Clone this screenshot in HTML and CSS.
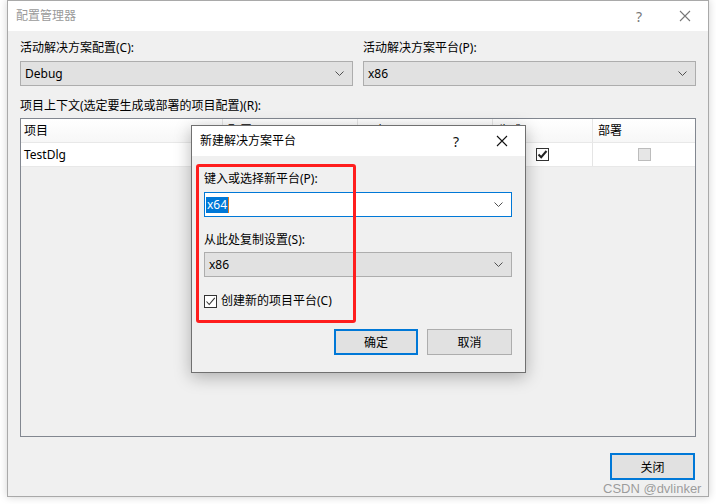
FILE: index.html
```html
<!DOCTYPE html>
<html lang="zh-CN">
<head>
  <meta charset="UTF-8">
  <title>配置管理器</title>
  <link rel="stylesheet" href="styles.css">
</head>
<body>
  <div class="window">
    <div class="titlebar">
      <span class="title">配置管理器</span>
      <span class="tb-btn">?</span>
      <span class="tb-btn">
        <svg width="12" height="12" viewBox="0 0 12 12"><path d="M1 1L11 11M11 1L1 11" stroke="currentColor" stroke-width="1.1" fill="none"/></svg>
      </span>
    </div>
    <div class="content">
      <div class="selectors">
        <div class="field">
          <div class="label">活动解决方案配置(C):</div>
          <div class="combo"><span>Debug</span><svg class="chev" width="9" height="5" viewBox="0 0 9 5"><path d="M0.5 0.5L4.5 4.5L8.5 0.5" stroke="#505050" fill="none"/></svg></div>
        </div>
        <div class="field">
          <div class="label">活动解决方案平台(P):</div>
          <div class="combo"><span>x86</span><svg class="chev" width="9" height="5" viewBox="0 0 9 5"><path d="M0.5 0.5L4.5 4.5L8.5 0.5" stroke="#505050" fill="none"/></svg></div>
        </div>
      </div>
      <div class="label grid-label">项目上下文(选定要生成或部署的项目配置)(R):</div>
      <div class="grid">
        <div class="grid-row header">
          <div class="cell first">项目</div>
          <div class="cell">配置</div>
          <div class="cell">平台</div>
          <div class="cell">生成</div>
          <div class="cell">部署</div>
        </div>
        <div class="grid-row">
          <div class="cell first">TestDlg</div>
          <div class="cell"></div>
          <div class="cell"></div>
          <div class="cell center">
            <span class="check on"><svg width="11" height="11" viewBox="0 0 11 11"><path d="M1.5 5.5L4.2 8.2L9.5 2" stroke="#222" stroke-width="2" fill="none"/></svg></span>
          </div>
          <div class="cell center"><span class="check disabled"></span></div>
        </div>
      </div>
      <div class="footer">
        <button class="btn default">关闭</button>
      </div>
    </div>
  </div>

  <div class="dialog">
    <div class="titlebar dlg-titlebar">
      <span class="title">新建解决方案平台</span>
      <span class="tb-btn">?</span>
      <span class="tb-btn">
        <svg width="12" height="12" viewBox="0 0 12 12"><path d="M1 1L11 11M11 1L1 11" stroke="currentColor" stroke-width="1.1" fill="none"/></svg>
      </span>
    </div>
    <div class="dlg-body">
      <div class="label">键入或选择新平台(P):</div>
      <div class="combo editable"><span class="selected">x64</span><span class="caret"></span><svg class="chev" width="9" height="5" viewBox="0 0 9 5"><path d="M0.5 0.5L4.5 4.5L8.5 0.5" stroke="#505050" fill="none"/></svg></div>
      <div class="label second">从此处复制设置(S):</div>
      <div class="combo"><span>x86</span><svg class="chev" width="9" height="5" viewBox="0 0 9 5"><path d="M0.5 0.5L4.5 4.5L8.5 0.5" stroke="#505050" fill="none"/></svg></div>
      <div class="check-row">
        <span class="check thin"><svg width="11" height="11" viewBox="0 0 11 11"><path d="M1.5 5.5L4.2 8.5L9.8 1.8" stroke="#333" stroke-width="1.1" fill="none"/></svg></span>
        <span>创建新的项目平台(C)</span>
      </div>
      <div class="buttons">
        <button class="btn default">确定</button>
        <button class="btn">取消</button>
      </div>
    </div>
  </div>

  <div class="annotation"></div>
  <div class="watermark">CSDN @dvlinker</div>
</body>
</html>
```

FILE: styles.css
```css
/* Base */
body {
  margin: 0;
  background-color: #ffffff;
  font-family: "Noto Sans", "Noto Sans CJK SC", sans-serif;
  font-size: 12px;
  color: #000;
  width: 716px;
  height: 504px;
  overflow: hidden;
  position: relative;
}

.window {
  margin-left: 7px;
  width: 702px;
  height: 497px;
  box-sizing: border-box;
  border: 1px solid #a9a9a9;
  background-color: #f0f0f0;
  box-shadow: 0 0 8px rgba(0, 0, 0, 0.18);
  display: flex;
  flex-direction: column;
}

/* Title bars */
.titlebar {
  height: 30px;
  background-color: #ffffff;
  display: flex;
  align-items: center;
  flex-shrink: 0;
}

.titlebar .title {
  flex: 1;
  padding-left: 8px;
  color: #9a9a9a;
  line-height: 16px;
}

.tb-btn {
  width: 46px;
  height: 30px;
  display: flex;
  align-items: center;
  justify-content: center;
  color: #777;
  font-size: 14px;
}

.dlg-titlebar .title {
  color: #000;
}

.dlg-titlebar .tb-btn {
  color: #111;
}

/* Main content */
.content {
  flex: 1;
  padding: 9px 12px 0 12px;
  display: flex;
  flex-direction: column;
}

.selectors {
  display: grid;
  grid-template-columns: 333px 1fr;
  column-gap: 10px;
}

.label {
  line-height: 16px;
  margin-bottom: 5px;
}

.combo {
  height: 25px;
  box-sizing: border-box;
  border: 1px solid #adadad;
  background-color: #e1e1e1;
  display: flex;
  align-items: center;
  padding: 0 8px 0 4px;
  line-height: 16px;
}

.combo span:first-child {
  flex: 0 0 auto;
}

.combo .chev {
  margin-left: auto;
}

.combo.editable {
  background-color: #ffffff;
  border-color: #0078d7;
  padding-left: 1px;
}

.selected {
  background-color: #0078d7;
  color: #ffffff;
  padding: 0 1px;
}

.caret {
  width: 1px;
  height: 16px;
  background-color: #e07b1a;
}

.grid-label {
  margin-top: 12px;
  margin-bottom: 4px;
}

/* Project grid */
.grid {
  height: 319px;
  box-sizing: border-box;
  border: 1px solid #828790;
  background-color: #f0f0f0;
}

.grid-row {
  display: grid;
  grid-template-columns: 202px 135px 135px 100px 1fr;
  height: 23px;
  background-color: #ffffff;
  border-bottom: 1px solid #e8e8e8;
}

.grid-row.header {
  background: linear-gradient(#ffffff, #f7f7f7);
}

.cell {
  border-right: 1px solid #e5e5e5;
  padding-left: 5px;
  line-height: 23px;
  display: flex;
  align-items: center;
}

.cell.first {
  padding-left: 3px;
}

.cell:last-child {
  border-right: none;
}

.cell.center {
  justify-content: center;
  padding-left: 0;
}

.check {
  width: 13px;
  height: 13px;
  box-sizing: border-box;
  border: 1px solid #333;
  background-color: #ffffff;
  display: flex;
  align-items: center;
  justify-content: center;
}

.check.disabled {
  border-color: #bcbcbc;
  background-color: #e6e6e6;
  margin-left: 1px;
}

.check.thin {
  border-color: #333;
}

/* Buttons */
.footer {
  display: flex;
  justify-content: flex-end;
  margin-top: 16px;
  margin-right: 1px;
}

.btn {
  width: 85px;
  height: 27px;
  box-sizing: border-box;
  border: 1px solid #adadad;
  background-color: #e1e1e1;
  font-family: "Noto Sans", "Noto Sans CJK SC", sans-serif;
  font-size: 12px;
  color: #000;
  padding: 0;
}

.btn.default {
  border: 2px solid #0078d7;
}

/* New platform dialog */
.dialog {
  position: absolute;
  left: 191px;
  top: 125px;
  width: 335px;
  height: 248px;
  box-sizing: border-box;
  border: 1px solid #707070;
  background-color: #f0f0f0;
  box-shadow: 0 4px 16px rgba(0, 0, 0, 0.28);
}

.dlg-body {
  padding: 15px 13px 0 12px;
}

.label.second {
  margin-top: 15px;
  margin-bottom: 4px;
}

.check-row {
  display: flex;
  align-items: center;
  gap: 4px;
  margin-top: 16px;
  line-height: 16px;
}

.buttons {
  display: flex;
  justify-content: flex-end;
  gap: 9px;
  margin-top: 20px;
}

.buttons .btn {
  height: 26px;
}

.buttons .btn.default {
  width: 84px;
}

/* Overlays */
.annotation {
  position: absolute;
  left: 196px;
  top: 164px;
  width: 160px;
  height: 159px;
  box-sizing: border-box;
  border: 3px solid #ff1e1e;
  border-radius: 3px;
}

.watermark {
  position: absolute;
  left: 603px;
  top: 481px;
  font-family: "Liberation Sans", sans-serif;
  font-size: 13px;
  line-height: 16px;
  color: rgba(140, 140, 140, 0.85);
}
```
